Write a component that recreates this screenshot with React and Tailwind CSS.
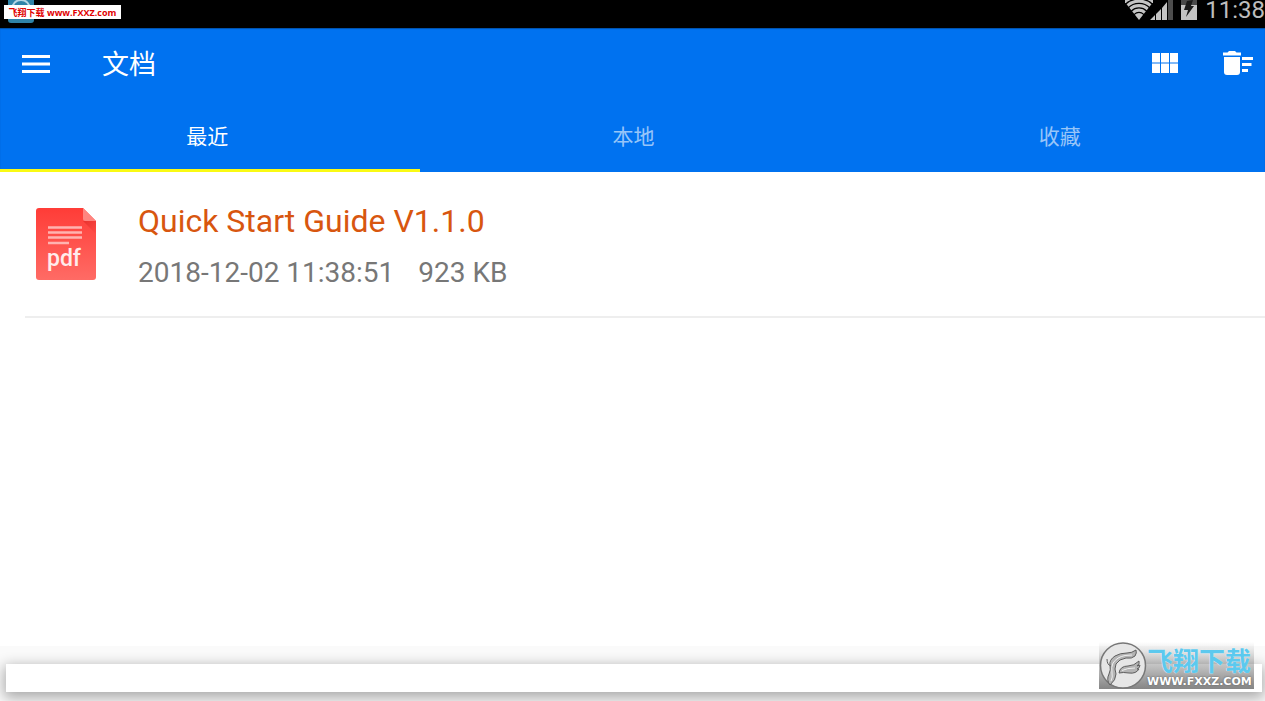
import { useState } from 'react';

const tabs = [
  { id: 'recent', label: '最近' },
  { id: 'local', label: '本地' },
  { id: 'favorites', label: '收藏' },
];

const documents = [
  { id: 1, title: 'Quick Start Guide V1.1.0', date: '2018-12-02 11:38:51', size: '923 KB' },
];

function WifiIcon() {
  return (
    <svg width="28" height="20" viewBox="0 0 28 20" className="-mr-[3px]" aria-hidden="true">
      <defs>
        <clipPath id="wifi-fan">
          <path d="M14 20 L-1 1 L-1 -6 H29 V1 Z" />
        </clipPath>
      </defs>
      <g clipPath="url(#wifi-fan)" fill="none" stroke="#c4c4c4" strokeWidth="3.200">
        <circle cx="14" cy="19" r="3" strokeWidth="6" />
        <circle cx="14" cy="19" r="8.800" />
        <circle cx="14" cy="19" r="13.300" />
        <circle cx="14" cy="19" r="17.800" />
        <circle cx="14" cy="19" r="22.300" />
      </g>
    </svg>
  );
}

function SignalIcon() {
  return (
    <svg width="23" height="20" viewBox="0 0 23 20" aria-hidden="true">
      <path d="M0 20 L5 15 V20 Z M6 14 L11 9 V20 H6 Z M12 8 L17 2 V20 H12 Z" fill="#c4c4c4" />
      <path d="M18 0 H23 V20 H18 Z" fill="#4d4d4d" />
    </svg>
  );
}

function BatteryIcon() {
  return (
    <svg width="16" height="20" viewBox="0 0 16 20" aria-hidden="true">
      <path d="M0 0 H16 V5 H0 Z" fill="#4a4a4a" />
      <path d="M0 5 H16 V20 H0 Z" fill="#c4c4c4" />
      <path d="M6 1 L12 0 L10 6 H13 L5 17 L7 10 H3 Z" fill="#1a1a1a" />
    </svg>
  );
}

function MenuIcon() {
  return (
    <svg width="28" height="18" viewBox="0 0 28 18" fill="#fff" aria-hidden="true">
      <path d="M0 0 H28 V3 H0 Z M0 7.500 H28 V10.500 H0 Z M0 15 H28 V18 H0 Z" />
    </svg>
  );
}

function GridIcon() {
  return (
    <svg width="26" height="20" viewBox="0 0 26 20" fill="#fff" aria-hidden="true">
      <path d="M0 0 H8 V9.500 H0 Z M9 0 H17 V9.500 H9 Z M18 0 H26 V9.500 H18 Z" />
      <path d="M0 10.500 H8 V20 H0 Z M9 10.500 H17 V20 H9 Z M18 10.500 H26 V20 H18 Z" />
    </svg>
  );
}

function ClearIcon() {
  return (
    <svg width="30" height="24" viewBox="0 0 30 24" fill="#fff" aria-hidden="true">
      <path d="M0 1.500 H4.500 L6 0 H12 L13.500 1.500 H18 V4.500 H0 Z" />
      <path d="M1 6 H17 V21 Q17 24 14 24 H4 Q1 24 1 21 Z" />
      <path d="M19 6 H30 V9 H19 Z M19 12 H28.500 V15 H19 Z M19 18 H25 V21 H19 Z" />
    </svg>
  );
}

function PdfIcon() {
  return (
    <svg width="60" height="72" viewBox="0 0 60 72" className="shrink-0" role="img" aria-label="pdf">
      <defs>
        <linearGradient id="pdf-page" x1="0" y1="0" x2="0" y2="1">
          <stop offset="0" stopColor="#ff3c37" />
          <stop offset="1" stopColor="#ff6b65" />
        </linearGradient>
        <linearGradient id="pdf-shade" x1="0" y1="0" x2="1" y2="1">
          <stop offset="0" stopColor="#e8322e" />
          <stop offset="1" stopColor="#ff4b46" />
        </linearGradient>
      </defs>
      <path d="M3 0 H47 L60 13 V69 Q60 72 57 72 H3 Q0 72 0 69 V3 Q0 0 3 0 Z" fill="url(#pdf-page)" />
      <path d="M47 13 H60 V26 Z" fill="url(#pdf-shade)" />
      <path d="M47 0 L60 13 H49 Q47 13 47 11 Z" fill="#ff8580" />
      <path d="M12 19.500 H46 M12 24.500 H46 M12 29.500 H46 M12 35 H33" stroke="#ffb3b0" strokeWidth="2.500" />
      <text x="28" y="58" textAnchor="middle" fontSize="23" fontWeight="500" fill="#ffeceb" fontFamily="Roboto, sans-serif">
        pdf
      </text>
    </svg>
  );
}

function BirdLogo() {
  return (
    <svg width="48" height="47" viewBox="0 0 48 47" className="shrink-0" aria-hidden="true">
      <circle cx="24" cy="23.500" r="22.500" fill="#e6e6e6" stroke="#777" strokeWidth="1.500" />
      <g fill="#b4b4b4" stroke="#5e5e5e" strokeWidth="1" strokeLinejoin="round">
        <path d="M11 43 Q7 38 10 32 Q12 28 11 23 Q10 18 16 14 Q21 11 28 11 Q33 11 37 8 Q38 11 36 14 Q33 17 27 16 Q20 17 17 22 Q15 27 17 32 Q17 38 11 43 Z" />
        <path d="M20 31 Q21 24 29 24 Q35 24 40 19 Q41 22 38 24 L41 23 Q41 26 38 27 L40 27 Q37 32 30 31 Q24 30 20 31 Z" />
        <path d="M8 17 Q8 23 12 24" fill="none" />
      </g>
      <path d="M12 39 Q14 35 13 31 Q12 25 14 21 Q18 15 26 13.500 L33 13 M23 28.500 Q28 26 36 26" fill="none" stroke="#eee" />
    </svg>
  );
}

function StatusBar() {
  return (
    <div className="relative flex h-7 items-start justify-between overflow-hidden bg-black">
      <svg width="26" height="23" viewBox="0 0 26 23" className="ml-2" aria-hidden="true">
        <path d="M0 0 H26 V20 Q26 23 23 23 H3 Q0 23 0 20 Z" fill="#2f83a8" />
        <circle cx="13" cy="9" r="9" fill="none" stroke="#b5d6e4" strokeWidth="2" />
      </svg>
      <div className="flex text-[#bdbdbd]">
        <WifiIcon />
        <SignalIcon />
        <span className="ml-2">
          <BatteryIcon />
        </span>
        <span className="ml-2 text-2xl leading-5">11:38</span>
      </div>
      <span className="absolute left-1 top-[5px] flex h-[14px] w-[117px] items-center justify-center whitespace-pre bg-white font-['Open_Sans','Noto_Sans_CJK_SC',sans-serif] text-[9px] font-bold leading-none text-[#e00000]">
        飞翔下载 www.FXXZ.com
      </span>
    </div>
  );
}

function Watermark() {
  return (
    <div className="absolute bottom-3 right-[11px] flex h-[47px] w-[155px] bg-linear-to-b from-white/0 to-[#858585]">
      <BirdLogo />
      <div className="flex flex-col whitespace-nowrap pt-1">
        <span className="h-7 font-['Noto_Sans_CJK_SC',sans-serif] text-[26px] font-bold leading-7 text-[#5cc9ee] [text-shadow:0_0_1px_#fff]">
          飞翔下载
        </span>
        <span className="font-['DejaVu_Sans',sans-serif] text-[11px] font-bold leading-4 text-white [text-shadow:0_0_2px_#555]">
          WWW.FXXZ.COM
        </span>
      </div>
    </div>
  );
}

export default function App() {
  const [activeTab, setActiveTab] = useState('recent');

  return (
    <div className="relative flex min-h-screen flex-col overflow-hidden bg-white font-[Roboto,'Noto_Sans_CJK_SC',sans-serif]">
      <StatusBar />

      <header className="bg-[#0072f0] text-white shadow-[inset_0_1px_1px_#0050a8]">
        <div className="flex h-[72px] items-center pl-[22px] pr-3">
          <button type="button" aria-label="菜单">
            <MenuIcon />
          </button>
          <h1 className="ml-[52px] pt-0.5 text-[27px] leading-9">文档</h1>
          <div className="ml-auto flex items-center gap-[45px] pb-0.5">
            <button type="button" aria-label="网格">
              <GridIcon />
            </button>
            <button type="button" aria-label="清空">
              <ClearIcon />
            </button>
          </div>
        </div>

        <nav className="-ml-[6px] -mr-2 grid h-[72px] grid-cols-3">
          {tabs.map(tab => (
            <button
              key={tab.id}
              type="button"
              onClick={() => setActiveTab(tab.id)}
              className={
                activeTab === tab.id
                  ? 'border-b-3 border-[#fafa14] pt-1.5 text-[21px] text-white'
                  : 'border-b-3 border-transparent pt-1.5 text-[21px] text-white/60'
              }
            >
              {tab.label}
            </button>
          ))}
        </nav>
      </header>

      <main className="flex-1">
        <ul>
          {documents.map(doc => (
            <li key={doc.id} className="ml-[25px] flex h-[146px] items-center border-b-2 border-[#eeeeee] pl-[11px]">
              <PdfIcon />
              <div className="ml-[42px] pt-1.5">
                <h2 className="text-[32px] leading-[52px] text-[#d8560f]">{doc.title}</h2>
                <p className="flex gap-6 text-[28px] leading-[52px] text-[#777777]">
                  <span>{doc.date}</span>
                  <span>{doc.size}</span>
                </p>
              </div>
            </li>
          ))}
        </ul>
      </main>

      <footer className="h-[55px] overflow-hidden bg-[#fafafa] pl-[6px] pr-[3px] pt-[18px]">
        <div className="h-7 bg-white shadow-[0_4px_14px_2px_rgba(0,0,0,0.32)]" />
      </footer>

      <Watermark />
    </div>
  );
}
